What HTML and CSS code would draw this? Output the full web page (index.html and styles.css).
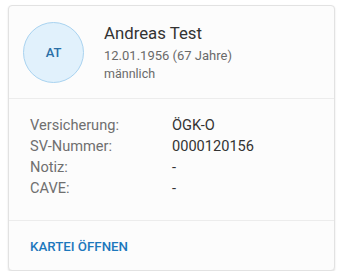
FILE: index.html
```
<!DOCTYPE html>
<html lang="de">
<head>
<meta charset="utf-8">
<link rel="stylesheet" href="styles.css">
</head>
<body>
<div class="card">
  <div class="head">
    <div class="avatar">AT</div>
    <div class="info">
      <div class="name">Andreas Test</div>
      <div class="sub">12.01.1956 (67 Jahre)</div>
      <div class="sub small">männlich</div>
    </div>
  </div>
  <div class="body">
    <div class="row"><span class="label">Versicherung:</span><span class="value">ÖGK-O</span></div>
    <div class="row"><span class="label">SV-Nummer:</span><span class="value">0000120156</span></div>
    <div class="row"><span class="label">Notiz:</span><span class="value">-</span></div>
    <div class="row"><span class="label">CAVE:</span><span class="value">-</span></div>
  </div>
  <div class="foot">
    <a class="action">KARTEI ÖFFNEN</a>
  </div>
</div>
</body>
</html>
```
FILE: styles.css
```
html, body { margin: 0; padding: 0; background: #ffffff; }
body { padding: 5px 5px 0 8px; font-family: Roboto, "Liberation Sans", sans-serif; }
.card {
  width: 327px;
  height: 266px;
  box-sizing: border-box;
  background: #fcfcfc;
  border: 1px solid #e2e2e2;
  border-radius: 4px;
  box-shadow: 0 1px 2px rgba(0,0,0,0.12);
  display: flex;
  flex-direction: column;
}
.head {
  height: 93px;
  box-sizing: border-box;
  display: flex;
  align-items: center;
  padding: 0 0 0 14px;
  gap: 20px;
  border-bottom: 1px solid #ececec;
}
.avatar {
  width: 61px; height: 61px;
  box-sizing: border-box;
  border-radius: 50%;
  background: #e1f1fc;
  border: 1px solid #a9d3f0;
  display: flex; align-items: center; justify-content: center;
  color: #2a6fa6;
  font-size: 13px;
  font-weight: 500;
}
.info { display: flex; flex-direction: column; }
.name { font-size: 16.8px; color: #333; line-height: 22px; }
.sub { font-size: 13px; color: #6a6a6a; line-height: 18px; margin-top: 3px; }
.sub.small { font-size: 12.5px; margin-top: 0; }
.body {
  padding: 16px 0 0 21px;
  height: 122px;
  box-sizing: border-box;
  border-bottom: 1px solid #ececec;
}
.row { display: flex; font-size: 14.6px; line-height: 21px; }
.label { width: 142px; color: #6f6f6f; }
.value { color: #333; }
.foot { flex: 1; display: flex; align-items: center; padding-left: 21px; padding-top: 1px; }
.action { color: #1c78bd; font-size: 13.3px; font-weight: 500; }
```
